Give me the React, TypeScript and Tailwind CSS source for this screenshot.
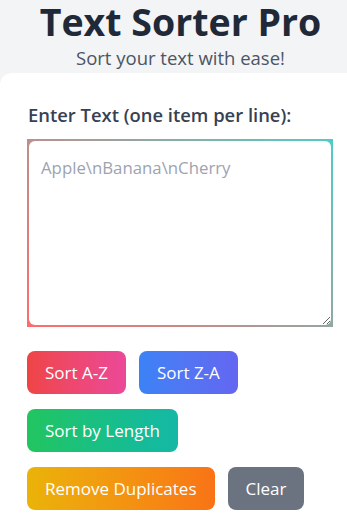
const buttons = [
  [
    { label: "Sort A-Z", cls: "bg-gradient-to-r from-[#ef4444] to-[#ec4899]" },
    { label: "Sort Z-A", cls: "bg-gradient-to-r from-[#3b82f6] to-[#6366f1]" },
  ],
  [{ label: "Sort by Length", cls: "bg-gradient-to-r from-[#22c55e] to-[#14b8a6]" }],
  [
    { label: "Remove Duplicates", cls: "bg-gradient-to-r from-[#eab308] to-[#f97316]" },
    { label: "Clear", cls: "bg-[#6b7280]" },
  ],
];

export default function App() {
  return (
    <div className="min-h-screen w-full overflow-hidden bg-[#f3f4f6] font-['Segoe_UI','Open_Sans',sans-serif]">
      <div className="w-[361px]">
        <header className="flex flex-col items-center pt-[1px]">
          <h1 className="text-[37.5px] font-bold leading-[42px] text-[#1f2937]">Text Sorter Pro</h1>
          <p className="mt-[1px] text-[18.5px] leading-[28px] text-[#4b5563]">Sort your text with ease!</p>
        </header>

        <main className="mt-[1px] min-h-[460px] rounded-tl-xl bg-white px-[27px] pt-7 pb-7">
          <label className="mb-[11px] block pl-[1px] text-[18.4px] font-semibold leading-[27px] text-[#374151]">
            Enter Text (one item per line):
          </label>
          <div className="w-[306px] bg-[linear-gradient(45deg,#ff6b6b,#4ecdc4)] p-[2px]">
            <textarea
              placeholder="Apple\nBanana\nCherry"
              className="block h-[184px] w-full resize-y rounded-[6px] border-0 bg-white px-3 py-[14px] text-[16.8px] leading-[25px] text-[#111827] outline-none placeholder:text-[#9ca3af]"
            />
          </div>
          <div className="mt-6 flex flex-col gap-[15px]">
            {buttons.map((row, i) => (
              <div key={i} className="flex gap-[13px]">
                {row.map((b) => (
                  <button
                    key={b.label}
                    type="button"
                    className={`rounded-lg px-[18px] py-[8px] text-[17px] leading-[27px] text-white ${b.cls}`}
                  >
                    {b.label}
                  </button>
                ))}
              </div>
            ))}
          </div>
        </main>
      </div>
    </div>
  );
}
